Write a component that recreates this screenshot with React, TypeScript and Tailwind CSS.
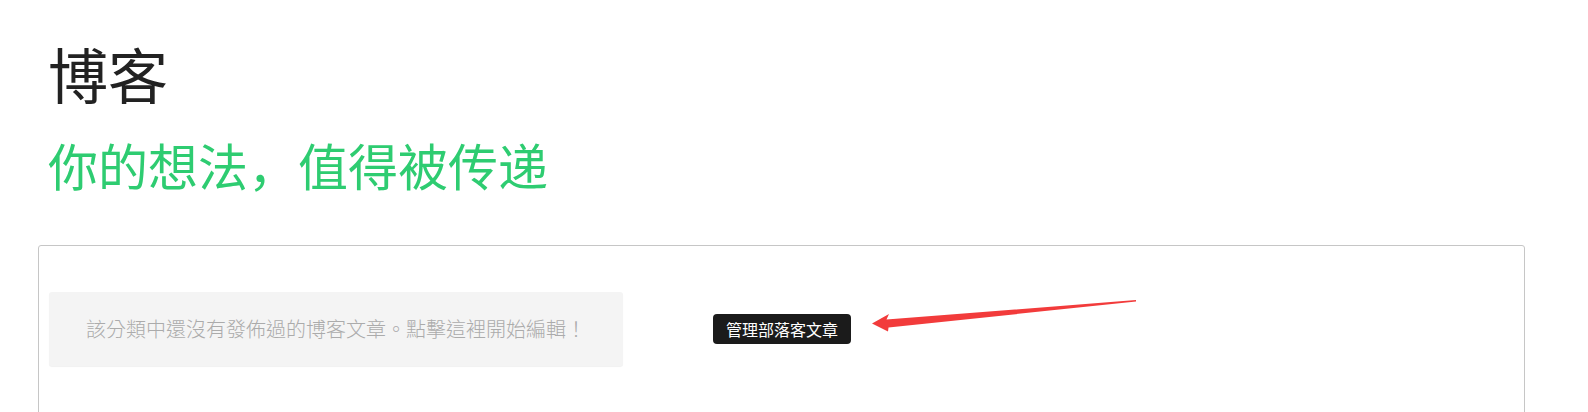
import React from "react";

export default function App() {
  return (
    <div className="min-h-screen w-full bg-white overflow-hidden">
      <div className="pl-[38px] pr-[63px]">
        <div className="pl-[10px] pt-[43px]">
          <h1
            className="text-[60px] leading-none font-normal text-[#222222] m-0"
            style={{ fontFamily: '"Noto Sans CJK SC", "Noto Sans", sans-serif' }}
          >
            博客
          </h1>
          <h2
            className="mt-[36px] text-[50px] leading-none font-normal text-[#2ecc71]"
            style={{ fontFamily: '"Noto Sans CJK SC", "Noto Sans", sans-serif' }}
          >
            你的想法，值得被传递
          </h2>
        </div>
        <div className="relative mt-[56px] h-[300px] rounded-[3px] border border-[#c6c6c6] pl-[10px] pt-[46px]">
          <div className="flex items-center">
            <div
              className="flex h-[74px] w-[574px] items-center justify-center rounded-[3px] bg-[#f4f4f4] text-[20px] font-light text-[#ababab] shadow-[0_1px_1px_rgba(0,0,0,0.06)]"
              style={{ fontFamily: '"Noto Sans CJK TC", "Noto Sans", sans-serif' }}
            >
              該分類中還沒有發佈過的博客文章。點擊這裡開始編輯！
            </div>
            <div
              className="ml-[90px] flex h-[30px] items-center rounded-[4px] bg-[#1b1b1b] px-[13px] text-[16px] text-white"
              style={{ fontFamily: '"Noto Sans CJK TC", "Noto Sans", sans-serif' }}
            >
              管理部落客文章
            </div>
          </div>
          <svg
            className="pointer-events-none absolute left-[-39px] top-[-246px]"
            width="1588"
            height="412"
            viewBox="0 0 1588 412"
          >
            <polygon
              points="872,323.5 889,314 886.5,319.5 1136,300 1136,301.5 888.5,327.5 888,331.5"
              fill="#f23b3b"
            />
          </svg>
        </div>
      </div>
    </div>
  );
}
